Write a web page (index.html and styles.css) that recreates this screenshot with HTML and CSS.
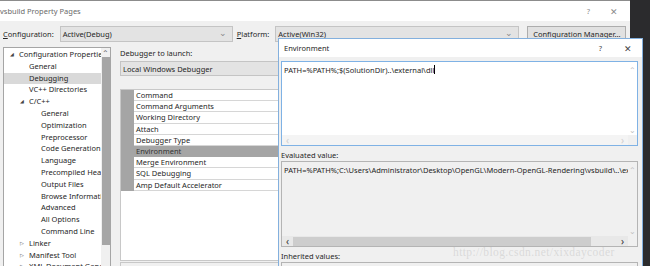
FILE: index.html
```html
<!DOCTYPE html>
<html lang="en">
<head>
    <meta charset="UTF-8">
    <title>vsbuild Property Pages</title>
    <link rel="stylesheet" href="styles.css">
</head>
<body>
    <div class="window">
        <div class="titlebar">
            <span class="title">vsbuild Property Pages</span>
            <span class="title-buttons"><span class="help">?</span><span class="close">&#x2715;</span></span>
        </div>

        <div class="config-row">
            <span class="label"><u>C</u>onfiguration:</span>
            <div class="combo combo-config">Active(Debug)<span class="arrow">&#x2304;</span></div>
            <span class="label"><u>P</u>latform:</span>
            <div class="combo combo-platform">Active(Win32)<span class="arrow">&#x2304;</span></div>
            <button class="button">C<u>o</u>nfiguration Manager...</button>
        </div>

        <div class="content">
            <div class="tree">
                <div class="tree-items">
                    <div class="node lvl0"><span class="tw open">&#x25E2;</span>Configuration Properties</div>
                    <div class="node lvl1">General</div>
                    <div class="node lvl1 selected">Debugging</div>
                    <div class="node lvl1">VC++ Directories</div>
                    <div class="node lvl1"><span class="tw open">&#x25E2;</span>C/C++</div>
                    <div class="node lvl2">General</div>
                    <div class="node lvl2">Optimization</div>
                    <div class="node lvl2">Preprocessor</div>
                    <div class="node lvl2">Code Generation</div>
                    <div class="node lvl2">Language</div>
                    <div class="node lvl2">Precompiled Headers</div>
                    <div class="node lvl2">Output Files</div>
                    <div class="node lvl2">Browse Information</div>
                    <div class="node lvl2">Advanced</div>
                    <div class="node lvl2">All Options</div>
                    <div class="node lvl2">Command Line</div>
                    <div class="node lvl1"><span class="tw">&#x25B7;</span>Linker</div>
                    <div class="node lvl1"><span class="tw">&#x25B7;</span>Manifest Tool</div>
                    <div class="node lvl1"><span class="tw">&#x25B7;</span>XML Document Generator</div>
                </div>
                <div class="vscroll">
                    <span class="sarrow">&#x2303;</span>
                    <div class="thumb"></div>
                </div>
            </div>

            <div class="settings">
                <div class="settings-label">Debugger to launch:</div>
                <div class="combo combo-debugger">Local Windows Debugger</div>
                <div class="grid">
                    <div class="row"><span class="gutter"></span><span class="cell">Command</span></div>
                    <div class="row"><span class="gutter"></span><span class="cell">Command Arguments</span></div>
                    <div class="row"><span class="gutter"></span><span class="cell">Working Directory</span></div>
                    <div class="row"><span class="gutter"></span><span class="cell">Attach</span></div>
                    <div class="row"><span class="gutter"></span><span class="cell">Debugger Type</span></div>
                    <div class="row active"><span class="gutter"></span><span class="cell">Environment</span></div>
                    <div class="row"><span class="gutter"></span><span class="cell">Merge Environment</span></div>
                    <div class="row"><span class="gutter"></span><span class="cell">SQL Debugging</span></div>
                    <div class="row"><span class="gutter"></span><span class="cell">Amp Default Accelerator</span></div>
                </div>
                <div class="description"></div>
            </div>
        </div>
    </div>

    <div class="dialog">
        <div class="dialog-title">
            <span>Environment</span>
            <span class="title-buttons"><span class="help">?</span><span class="close">&#x2715;</span></span>
        </div>
        <div class="dialog-body">
            <div class="edit-box editable">
                <div class="edit-text">PATH=%PATH%;$(SolutionDir)..\external\dll<span class="caret"></span></div>
                <div class="sb-v"><span>&#x2303;</span><span>&#x2304;</span></div>
                <div class="sb-h"><span>&lsaquo;</span><span>&rsaquo;</span></div>
                <div class="sb-corner"></div>
            </div>

            <div class="field-label">Evaluated value:</div>
            <div class="edit-box readonly">
                <div class="edit-text">PATH=%PATH%;C:\Users\Administrator\Desktop\OpenGL\Modern-OpenGL-Rendering\vsbuild\..\ex</div>
                <div class="sb-v"><span>&#x2303;</span><span>&#x2304;</span></div>
                <div class="sb-h"><span>&lsaquo;</span><div class="h-thumb"></div><span>&rsaquo;</span></div>
                <div class="sb-corner"></div>
            </div>

            <div class="field-label">Inherited values:</div>
            <div class="edit-box inherited"></div>
        </div>
    </div>

    <div class="watermark">http://blog.csdn.net/xixdaycoder</div>
</body>
</html>
```

FILE: styles.css
```css
/* Property pages dialog */
body {
    margin: 0;
    width: 650px;
    height: 266px;
    overflow: hidden;
    background-color: #2b2b2d;
    font-family: "Noto Sans", "Open Sans", sans-serif;
    font-size: 7.5px;
    color: #262626;
    position: relative;
}

u {
    text-decoration: underline;
    text-underline-offset: 1px;
}

.window {
    width: 630px;
    height: 266px;
    background-color: #f0f0f0;
    border-top: 1px solid #8c8c8c;
    box-sizing: border-box;
    overflow: hidden;
}

.titlebar {
    height: 20px;
    background-color: #fff;
    display: flex;
    align-items: center;
    justify-content: space-between;
    padding-right: 12px;
}

.title {
    color: #6a6a6a;
}

.title-buttons {
    display: flex;
    align-items: center;
    gap: 20px;
    color: #8a8a8a;
}

.title-buttons .close {
    font-size: 9px;
}

.config-row {
    display: flex;
    align-items: center;
    height: 16px;
    margin-top: 5px;
    padding-left: 3px;
}

.label {
    margin-right: 6px;
}

.combo {
    height: 16px;
    box-sizing: border-box;
    background-color: #e3e3e3;
    border: 1px solid #c4c4c4;
    display: flex;
    align-items: center;
    justify-content: space-between;
    padding: 0 5px 0 2px;
}

.combo .arrow {
    color: #8a8a8a;
    font-size: 9px;
    line-height: 6px;
    margin-top: -3px;
}

.combo-config {
    width: 173px;
    margin-right: 4px;
}

.combo-platform {
    width: 244px;
    margin-right: 8px;
}

.button {
    font: inherit;
    color: inherit;
    height: 16px;
    width: 99px;
    padding: 0;
    background-color: #e1e1e1;
    border: 1px solid #adadad;
}

.content {
    display: flex;
    margin-top: 5px;
    padding-left: 3px;
}

.tree {
    width: 108px;
    height: 222px;
    box-sizing: border-box;
    border: 1px solid #a5a5a5;
    border-bottom: none;
    background-color: #fff;
    display: flex;
}

.tree-items {
    flex: 1;
    min-width: 0;
    overflow: hidden;
    padding-top: 1px;
}

.node {
    height: 11.8px;
    line-height: 11.8px;
    white-space: nowrap;
    overflow: hidden;
}

.node.selected {
    background-color: #d9d9d9;
}

.lvl0 {
    padding-left: 15px;
}

.lvl1 {
    padding-left: 25px;
}

.lvl2 {
    padding-left: 37px;
}

.tw {
    display: inline-block;
    width: 9px;
    margin-left: -9px;
    font-size: 5px;
    color: #444;
    vertical-align: top;
}

.vscroll {
    width: 9px;
    background-color: #f0f0f0;
    display: flex;
    flex-direction: column;
    align-items: center;
}

.sarrow {
    font-size: 8px;
    line-height: 9px;
    height: 8px;
    color: #606060;
}

.vscroll .thumb {
    width: 8px;
    height: 188px;
    margin-top: 1px;
    background-color: #a6a6a6;
}

.settings {
    margin-left: 9px;
    width: 503px;
    display: flex;
    flex-direction: column;
}

.settings-label {
    height: 12px;
    line-height: 12px;
}

.combo-debugger {
    margin-top: 2px;
    height: 15px;
    padding-left: 2px;
}

.grid {
    margin-top: 13px;
    height: 172px;
    box-sizing: border-box;
    border: 1px solid #c8c8c8;
    background-color: #fff;
}

.row {
    display: flex;
    height: 11.2px;
    line-height: 11px;
}

.gutter {
    width: 13px;
    background-color: #a5a5a5;
    flex-shrink: 0;
}

.cell {
    flex: 1;
    padding-left: 2px;
    border-bottom: 1px solid #d6d6d6;
    white-space: nowrap;
}

.row.active .cell {
    background-color: #a5a5a5;
    border-bottom-color: #a5a5a5;
    color: #333;
}

.description {
    margin-top: 1px;
    height: 6px;
    border: 1px solid #c8c8c8;
    border-bottom: none;
    background-color: #f0f0f0;
}

/* Environment editor, floating over the property pages */
.dialog {
    position: absolute;
    left: 278px;
    top: 38px;
    width: 365px;
    height: 228px;
    box-sizing: border-box;
    border: 1px solid #83b0de;
    border-bottom: none;
    background-color: #f0f0f0;
    overflow: hidden;
}

.dialog-title {
    height: 18px;
    background-color: #fff;
    display: flex;
    align-items: center;
    justify-content: space-between;
    padding: 0 10px 0 5px;
}

.dialog-title .title-buttons {
    color: #444;
    gap: 22px;
}

.dialog-body {
    padding: 4px 4px 0 2px;
}

.edit-box {
    height: 85px;
    box-sizing: border-box;
    border: 1px solid #a0a0a0;
    display: grid;
    grid-template-columns: minmax(0, 1fr) 9px;
    grid-template-rows: 1fr 10px;
}

.edit-box.editable {
    border-color: #7fb2e5;
    background-color: #fff;
}

.edit-box.readonly {
    height: 86px;
    background-color: #f0f0f0;
    border-color: #b4b4b4;
}

.edit-box.inherited {
    height: 6px;
    display: block;
    border-color: #b4b4b4;
    border-bottom: none;
}

.edit-text {
    padding: 3px 0 0 2px;
    min-width: 0;
    white-space: nowrap;
    overflow: hidden;
    line-height: 10px;
    color: #1e1e1e;
}

.caret {
    display: inline-block;
    width: 1px;
    height: 9px;
    background-color: #000;
    vertical-align: -1px;
}

.sb-v {
    display: flex;
    flex-direction: column;
    justify-content: space-between;
    align-items: center;
    color: #c0c0c0;
    font-size: 8px;
    line-height: 10px;
    padding-top: 3px;
}

.editable .sb-v {
    background-color: #fff;
}

.sb-h {
    display: flex;
    align-items: center;
    justify-content: space-between;
    padding: 0 4px;
    color: #999;
    font-size: 10px;
    line-height: 10px;
    background-color: #f0f0f0;
}

.editable .sb-h {
    color: #cfcfcf;
    background-color: #f4f4f4;
}

.readonly .sb-h {
    color: #333;
    background-color: #e8e8e8;
}

.h-thumb {
    flex: 1;
    height: 9px;
    margin: 0 30px 0 4px;
    background-color: #cdcdcd;
}

.sb-corner {
    background-color: #f0f0f0;
}

.field-label {
    height: 10px;
    line-height: 10px;
    margin: 4px 0 1px;
}

.watermark {
    position: absolute;
    left: 453px;
    top: 246px;
    font-family: "Liberation Serif", serif;
    font-size: 11.5px;
    letter-spacing: 0.4px;
    color: rgba(190, 190, 190, 0.45);
    white-space: nowrap;
}
```
